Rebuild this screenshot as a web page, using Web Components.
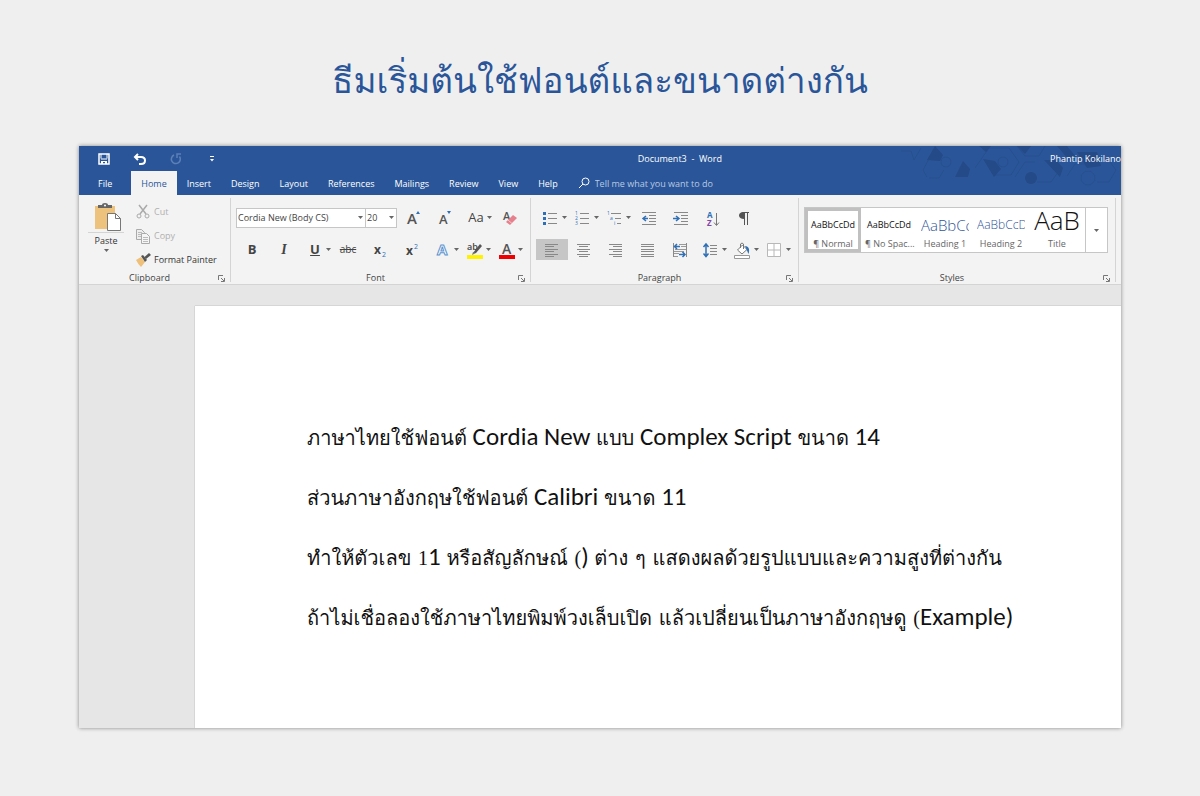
<!DOCTYPE html>
<html lang="th">
<head>
<meta charset="utf-8">
<title>Document3 - Word</title>
<style>
  :root {
    --blue: #2a5699;
    --text: #444;
    --muted: #b0b0b0;
    --line: #d4d4d4;
    --ribbon: #f3f3f3;
    --font-ui: "Open Sans", "Noto Sans", sans-serif;
    --font-thai: "Loma", "Liberation Sans", sans-serif;
  }
  body {
    margin: 0;
    min-height: 100vh;
    box-sizing: border-box;
    padding: 46px 79px 68px;
    background: #efefef;
    font: 9px/12px var(--font-ui);
    color: var(--text);
    display: flex;
    flex-direction: column;
  }
  h1 {
    margin: 0;
    padding-bottom: 30px;
    font: 35px/70px var(--font-thai);
    color: var(--blue);
    text-align: center;
  }
  /* latin runs sit in a larger sans face, complex-script digits in a thin serif */
  doc-page span { font: 25px/1 Carlito, Lato, sans-serif; }
  doc-page i { font: 20px/1 "Liberation Serif", serif; }
</style>
</head>
<body>
<h1>ธีมเริ่มต้นใช้ฟอนต์และขนาดต่างกัน</h1>

<word-window>
  <title-bar slot="title" user="Phantip Kokilano">Document3&nbsp; -&nbsp; Word</title-bar>
  <ribbon-tabs slot="tabs" active="Home"></ribbon-tabs>

  <ribbon-group slot="ribbon" name="Clipboard" style="--width: 152px">
    <paste-panel></paste-panel>
  </ribbon-group>

  <ribbon-group slot="ribbon" name="Font" style="--width: 300px">
    <tool-row>
      <pick-box label="Font" value="Cordia New (Body CS)" style="--width: 130px"></pick-box>
      <pick-box label="Font size" value="20" style="--width: 32px; --shift: -1px"></pick-box>
      <tool-button label="Grow font" icon="grow"></tool-button>
      <tool-button label="Shrink font" icon="shrink"></tool-button>
      <tool-button label="Change case" menu><span style="font-size: 13px">Aa</span></tool-button>
      <tool-button label="Clear formatting" icon="eraser"></tool-button>
    </tool-row>
    <tool-row>
      <tool-button label="Bold"><b style="font-size: 13px">B</b></tool-button>
      <tool-button label="Italic"><b style="font: italic bold 14px 'Liberation Serif', serif">I</b></tool-button>
      <tool-button label="Underline" menu><b style="font-size: 13px; text-decoration: underline">U</b></tool-button>
      <tool-button label="Strikethrough"><s style="font-size: 10px">abc</s></tool-button>
      <tool-button label="Subscript" icon="sub"></tool-button>
      <tool-button label="Superscript" icon="sup"></tool-button>
      <tool-button label="Text effects" icon="effects" menu></tool-button>
      <tool-button label="Highlight colour" icon="highlight" menu></tool-button>
      <tool-button label="Font colour" icon="color" menu></tool-button>
    </tool-row>
  </ribbon-group>

  <ribbon-group slot="ribbon" name="Paragraph" style="--width: 268px">
    <tool-row>
      <tool-button label="Bullets" icon="bullets" menu></tool-button>
      <tool-button label="Numbering" icon="numbers" menu></tool-button>
      <tool-button label="Multilevel list" icon="levels" menu></tool-button>
      <tool-button label="Decrease indent" icon="outdent"></tool-button>
      <tool-button label="Increase indent" icon="indent"></tool-button>
      <tool-button label="Sort" icon="sort"></tool-button>
      <tool-button label="Show marks" icon="pilcrow"></tool-button>
    </tool-row>
    <tool-row>
      <tool-button label="Align left" icon="left" pressed></tool-button>
      <tool-button label="Centre" icon="center"></tool-button>
      <tool-button label="Align right" icon="right"></tool-button>
      <tool-button label="Justify" icon="justify"></tool-button>
      <tool-button label="Text direction" icon="direction"></tool-button>
      <tool-button label="Line spacing" icon="spacing" menu></tool-button>
      <tool-button label="Shading" icon="shading" menu></tool-button>
      <tool-button label="Borders" icon="borders" menu></tool-button>
    </tool-row>
  </ribbon-group>

  <ribbon-group slot="ribbon" name="Styles" style="--width: 317px">
    <style-gallery>
      <style-card name="¶ Normal" selected>AaBbCcDd</style-card>
      <style-card name="¶ No Spac...">AaBbCcDd</style-card>
      <style-card name="Heading 1" style="--size: 15px; --weight: 300; --color: #2f5597">AaBbCc</style-card>
      <style-card name="Heading 2" style="--size: 12px; --weight: 300; --color: #2f5597">AaBbCcD</style-card>
      <style-card name="Title" style="--size: 26px; --lead: 16px; --weight: 300">AaB</style-card>
    </style-gallery>
  </ribbon-group>

  <doc-page>
    <p>ภาษาไทยใช้ฟอนต์<span lang="en"> Cordia New </span>แบบ<span lang="en"> Complex Script </span>ขนาด<span lang="en"> 14</span></p>
    <p>ส่วนภาษาอังกฤษใช้ฟอนต์<span lang="en"> Calibri </span>ขนาด<span lang="en"> 11</span></p>
    <p>ทำให้ตัวเลข <i>1</i><span lang="en">1 </span>หรือสัญลักษณ์ <i>(</i><span lang="en">) </span>ต่าง ๆ แสดงผลด้วยรูปแบบและความสูงที่ต่างกัน</p>
    <p>ถ้าไม่เชื่อลองใช้ภาษาไทยพิมพ์วงเล็บเปิด แล้วเปลี่ยนเป็นภาษาอังกฤษดู <i>(</i><span lang="en">Example)</span></p>
  </doc-page>
</word-window>

<script>
const lines = (color, ...rows) =>
  rows.map(([x1, x2, y]) => `<path d="M${x1} ${y}H${x2}" stroke="${color}"/>`).join('');

const glyph = (x, y, size, color, text, extra = '') =>
  `<text x="${x}" y="${y}" font-size="${size}" fill="${color}" ${extra}>${text}</text>`;

// all tool icons share a 18x18 grid
const ICONS = {
  grow: glyph(3, 15, 15, '#555', 'A', 'font-weight="600"') + '<path d="M12 5L14 2L16 5z" fill="#2f6fb5"/>',
  shrink: glyph(3, 15, 13, '#555', 'A', 'font-weight="600"') + '<path d="M11 2L13 5L15 2z" fill="#2f6fb5"/>',
  eraser: glyph(3, 11, 11, '#555', 'A', 'font-weight="600"') + '<path d="M6 13L13 6L17 9L10 16z" fill="#e5808d"/><path d="M8 11L12 14.500" stroke="#f7c4ca"/>',
  sub: glyph(3, 13, 12, '#444', 'x', 'font-weight="700"') + glyph(11, 16, 7, '#2f6fb5', '2'),
  sup: glyph(3, 14, 12, '#444', 'x', 'font-weight="700"') + glyph(11, 8, 7, '#2f6fb5', '2'),
  effects: glyph(3, 14, 15, '#fff', 'A', 'font-weight="700" stroke="#5b93d0" stroke-width="1"'),
  highlight: glyph(1, 9, 9, '#444', 'ab', 'font-weight="600"') + '<path d="M7 12L14 3L16 5L10 12z" fill="#555"/><path d="M6 14L7 11L10 12z" fill="#777"/><path d="M1 14h16v4H1z" fill="#fff200"/>',
  color: glyph(4, 13, 14, '#555', 'A', 'font-weight="600"') + '<path d="M1 14h16v4H1z" fill="#f00000"/>',
  bullets: '<path d="M1 3h3v3H1zM1 8h3v3H1zM1 13h3v3H1z" fill="#2f6fb5"/>' +
    lines('#888', [6, 15, 4.5], [6, 15, 9.5], [6, 15, 14.5]),
  numbers: glyph(1, 6, 5, '#2f6fb5', '1') + glyph(1, 11, 5, '#2f6fb5', '2') + glyph(1, 16, 5, '#2f6fb5', '3') +
    lines('#888', [6, 15, 4.5], [6, 15, 9.5], [6, 15, 14.5]),
  levels: glyph(1, 6, 5, '#2f6fb5', '1') + glyph(4, 11, 5, '#2f6fb5', 'a') + glyph(8, 16, 5, '#2f6fb5', 'i') +
    lines('#888', [5, 15, 4.5], [9, 15, 9.5], [11, 15, 14.5]),
  outdent: lines('#888', [3, 17, 3.5], [10, 17, 6.5], [10, 17, 9.5], [10, 17, 12.5], [3, 17, 15.5]) +
    '<path d="M9 9.500H4M7 7L4 9.500L7 12" stroke="#2f6fb5" stroke-width="1.500" fill="none"/>',
  indent: lines('#888', [3, 17, 3.5], [10, 17, 6.5], [10, 17, 9.5], [10, 17, 12.5], [3, 17, 15.5]) +
    '<path d="M2 9.500H8M5 7L8 9.500L5 12" stroke="#2f6fb5" stroke-width="1.500" fill="none"/>',
  sort: glyph(4, 9, 8, '#2f6fb5', 'A', 'font-weight="700"') + glyph(4, 17, 8, '#8445a5', 'Z', 'font-weight="700"') +
    '<path d="M13.500 4V16M11 13.500L13.500 16.500L16 13.500" stroke="#777" fill="none"/>',
  pilcrow: '<path d="M9 3C5 3 4 5 4 6.500C4 8.500 6 10 9 10z" fill="#555"/><path d="M8 3.500H14M9.500 3V16M12.500 3V16" stroke="#555" fill="none"/>',
  left: lines('#888', [2, 15, 3.5], [2, 11, 5.5], [2, 15, 8.5], [2, 11, 10.5], [2, 15, 13.5], [2, 11, 15.5]),
  center: lines('#888', [2, 15, 3.5], [4, 13, 5.5], [2, 15, 8.5], [4, 13, 10.5], [2, 15, 13.5], [4, 13, 15.5]),
  right: lines('#888', [2, 15, 3.5], [6, 15, 5.5], [2, 15, 8.5], [6, 15, 10.5], [2, 15, 13.5], [6, 15, 15.5]),
  justify: lines('#888', [2, 15, 3.5], [2, 15, 5.5], [2, 15, 8.5], [2, 15, 10.5], [2, 15, 13.5], [2, 15, 15.5]),
  direction: '<path d="M2.500 2V16M15.500 2V16" stroke="#888"/>' +
    lines('#999', [8, 15, 3.5], [10, 15, 5.5], [4, 15, 8.5], [3, 13, 10.5], [3, 8, 12.5], [3, 7, 15.5]) +
    '<path d="M9 5.500H4M6 3L3.500 5.500L6 8M8 13.500H14M11.500 11L14 13.500L11.500 16" stroke="#2f6fb5" stroke-width="1.500" fill="none"/>',
  spacing: '<path d="M4 4V15M1.500 6L4 3L6.500 6M1.500 12.500L4 15.500L6.500 12.500" stroke="#2f6fb5" stroke-width="1.500" fill="none"/>' +
    lines('#888', [8, 15, 4.5], [8, 15, 7.5], [8, 15, 10.5], [8, 15, 13.5]),
  shading: '<path d="M3.500 9L8.500 4L13 8.500L8 13z" fill="#fff" stroke="#777"/><path d="M6.500 7V3Q8 1 9.500 3V8" stroke="#777" fill="none"/><path d="M11 5C15 5 16 9 14.500 13C13.500 11 13 9 11 5z" fill="#2f6fb5"/><path d="M.5 14.500H15.500V17.500H.5z" fill="#fff" stroke="#999"/>',
  borders: '<path d="M1.500 2.500H14.500V15.500H1.500zM8 2.500V15.500M1.500 9H14.500" fill="#fff" stroke="#b8b8b8"/>',
  scissors: '<path d="M5 2L12 11M13 2L6 11" stroke="#aaa" stroke-width="1.500"/><circle cx="5" cy="13" r="2" fill="none" stroke="#aaa"/><circle cx="13" cy="13" r="2" fill="none" stroke="#aaa"/>',
  copy: '<path d="M2.500 2.500H7.500L10.500 5.500V12.500H2.500z" fill="#eee" stroke="#aaa"/><path d="M4 5.500H8M4 7.500H8M4 9.500H8" stroke="#bbb"/><path d="M7.500 6.500H12.500L15.500 9.500V16.500H7.500z" fill="#f5f5f5" stroke="#aaa"/><path d="M9 10.500H14M9 12.500H14M9 14.500H14" stroke="#bbb"/>',
  painter: '<path d="M2 9L7 6L11 11L7 16Q4 13 2 9z" fill="#eec07a"/><path d="M7 5L9 4L13 9L11 11z" fill="#555"/><path d="M10.500 6L15 2L17 4L12 8z" fill="#555"/>',
};

const svg = name => `<svg viewBox="0 0 18 18" width="18" height="18" fill="#444" overflow="visible" aria-hidden="true">${ICONS[name]}</svg>`;
const ARROW = '<svg class="arrow" viewBox="0 0 5 3" width="5" height="3" aria-hidden="true"><path d="M0 0H5L2.500 3z" fill="#666"/></svg>';

class WordWindow extends HTMLElement {
  constructor() {
    super();
    this.attachShadow({ mode: 'open' });
    this.shadowRoot.innerHTML = `
      <style>
        :host {
          flex: 1;
          display: flex;
          flex-direction: column;
          overflow: hidden;
          background: #e6e6e6;
          box-shadow: 0 0 4px rgba(0, 0, 0, .45);
        }
        header {
          position: relative;
          background: var(--blue);
        }
        header > svg {
          position: absolute;
          top: 0;
          right: 0;
        }
        .ribbon {
          display: flex;
          height: 89px;
          background: var(--ribbon);
          border-bottom: 1px solid var(--line);
        }
        main {
          flex: 1;
          display: flex;
          padding: 21px 0 0 116px;
        }
      </style>
      <header>
        <svg width="224" height="42" viewBox="0 0 224 42" fill="none" stroke="#264f8f" aria-hidden="true">
          <path d="M4 5h10l3 9 7-12M30 31l-4-7 8-15h6M32 32h10l5-8"/>
          <circle cx="49" cy="16" r="5"/><circle cx="106" cy="16" r="5"/><circle cx="191" cy="32" r="7"/>
          <path d="M78 22l14-20h20l10 14-8 13H98M120 0l8 10h14l6-10M118 31l10-15h10M140 36h14l10-14M170 30l8-12h14M200 36h12l7-12-6-8"/>
          <g fill="#244a87" stroke="none">
            <path d="M30 14L38 0l8 9-3 6zM58 31l8-16 7 8-2 8zM86 13l12 2 6 8-7 8zM82 0h12l-5 6zM120 0h14l-6 8zM147 14l16 17 3-9-7-8zM160 0h10l10 12-8 2zM180 6l10 16 14-2-4-14z"/>
            <circle cx="134" cy="32" r="6"/>
          </g>
        </svg>
        <slot name="title"></slot>
        <slot name="tabs"></slot>
      </header>
      <div class="ribbon"><slot name="ribbon"></slot></div>
      <main><slot></slot></main>`;
  }
}
customElements.define('word-window', WordWindow);

class TitleBar extends HTMLElement {
  constructor() {
    super();
    this.attachShadow({ mode: 'open' });
    this.shadowRoot.innerHTML = `
      <style>
        :host {
          position: relative;
          display: grid;
          grid-template-columns: 7fr auto 5fr;
          align-items: center;
          height: 25px;
          color: #fff;
        }
        nav { display: flex; gap: 8px; padding-left: 11px; }
        button {
          width: 28px;
          height: 20px;
          padding: 0;
          border: 0;
          background: none;
          display: grid;
          place-items: center;
        }
        .user { justify-self: end; white-space: nowrap; }
      </style>
      <nav>
        <button aria-label="Save"><svg width="12" height="12" viewBox="0 0 12 12"><path d="M1 1H11V11H1z" fill="none" stroke="#fff" stroke-width="1.500"/><path d="M3 6H9M3 1V5.500M9 1V5.500" stroke="#fff"/><path d="M3 8H9V11H7V9H5V11H3z" fill="#fff"/></svg></button>
        <button aria-label="Undo"><svg width="14" height="12" viewBox="0 0 14 12" fill="none" stroke="#fff" stroke-width="2"><path d="M5 1L2 4L5 7M2 4H8Q12 4 12 7.500T8 11H6"/></svg></button>
        <button aria-label="Redo"><svg width="12" height="12" viewBox="0 0 12 12" fill="none" stroke="#5c80b8" stroke-width="1.500"><path d="M4 2A4.500 4.500 0 1 0 9.500 3.500M7 5V1H11"/></svg></button>
        <button aria-label="Customise"><svg width="4" height="6" viewBox="0 0 4 6"><path d="M0 .500H4" stroke="#fff"/><path d="M0 3H4L2 5.500z" fill="#fff"/></svg></button>
      </nav>
      <slot></slot>
      <span class="user">${this.getAttribute('user')}</span>`;
  }
}
customElements.define('title-bar', TitleBar);

class RibbonTabs extends HTMLElement {
  constructor() {
    super();
    this.attachShadow({ mode: 'open' });
    const tabs = ['Home', 'Insert', 'Design', 'Layout', 'References', 'Mailings', 'Review', 'View', 'Help'];
    const active = this.getAttribute('active');
    this.shadowRoot.innerHTML = `
      <style>
        :host { position: relative; display: flex; height: 24px; }
        a {
          padding: 1px 10px 0;
          line-height: 23px;
          color: #fff;
          text-decoration: none;
        }
        a.file { padding: 1px 19px 0; }
        a.active { background: var(--ribbon); color: var(--blue); }
        label { display: flex; align-items: center; gap: 5px; padding-left: 10px; }
        input {
          width: 200px;
          padding: 1px 0 0;
          border: 0;
          background: none;
          font: inherit;
          color: #fff;
        }
        input::placeholder { color: #b9c9e3; opacity: 1; }
      </style>
      <a class="file" href="#file">File</a>
      ${tabs.map(t => `<a href="#${t.toLowerCase()}" class="${t === active ? 'active' : ''}">${t}</a>`).join('')}
      <label>
        <svg width="12" height="12" viewBox="0 0 12 12" fill="none" stroke="#fff" aria-hidden="true"><circle cx="7.500" cy="4.500" r="3.500"/><path d="M5 7L1 11"/></svg>
        <input type="text" aria-label="Tell me" placeholder="Tell me what you want to do">
      </label>`;
  }
}
customElements.define('ribbon-tabs', RibbonTabs);

class RibbonGroup extends HTMLElement {
  constructor() {
    super();
    this.attachShadow({ mode: 'open' });
    this.shadowRoot.innerHTML = `
      <style>
        :host {
          flex: none;
          box-sizing: border-box;
          width: var(--width);
          margin: 3px 0 2px;
          padding: 0 3px 0 5px;
          border-right: 1px solid var(--line);
          display: flex;
          flex-direction: column;
        }
        .body {
          flex: 1;
          display: flex;
          flex-direction: column;
          gap: 11px;
          padding-top: 9px;
        }
        footer {
          display: grid;
          grid-template-columns: 1fr 12px;
          align-items: center;
          height: 8px;
          line-height: 8px;
          text-align: center;
        }
        button { padding: 0; border: 0; background: none; line-height: 0; }
      </style>
      <div class="body"><slot></slot></div>
      <footer>
        <span>${this.getAttribute('name')}</span>
        <button aria-label="More options"><svg width="7" height="7" viewBox="0 0 7 7" fill="none" stroke="#777"><path d="M.5 5V.500H5M3 3L6 6M6.500 3V6.500H3"/></svg></button>
      </footer>`;
  }
}
customElements.define('ribbon-group', RibbonGroup);

class PastePanel extends HTMLElement {
  constructor() {
    super();
    this.attachShadow({ mode: 'open' });
    this.shadowRoot.innerHTML = `
      <style>
        :host { display: flex; gap: 10px; margin-top: -9px; padding: 5px 0 0 4px; }
        button {
          padding: 0;
          border: 0;
          background: none;
          font: inherit;
          color: #333;
          display: flex;
          align-items: center;
          gap: 2px;
        }
        .paste { flex-direction: column; width: 36px; height: 54px; }
        .paste .big { border-bottom: 1px solid var(--line); padding: 0 1px 0 5px; }
        .side { display: flex; flex-direction: column; gap: 6px; }
        .side button { height: 18px; }
        .off { color: var(--muted); }
        svg { display: block; }
      </style>
      <button class="paste">
        <svg class="big" width="30" height="29" viewBox="0 0 30 29" aria-hidden="true">
          <path d="M2 3H22V26H2z" fill="#edc27d"/>
          <path d="M5 2H9Q9 0 12 0T15 2H19V5H5z" fill="#666"/><circle cx="12" cy="2.500" r="1" fill="#fff"/>
          <path d="M14.500 10.500H22.500L27.500 15.500V27.500H14.500z" fill="#fff" stroke="#777"/><path d="M22.500 10.500V15.500H27.500" fill="none" stroke="#777"/>
        </svg>
        <span>Paste</span>${ARROW}
      </button>
      <div class="side">
        <button class="off">${svg('scissors')}Cut</button>
        <button class="off">${svg('copy')}Copy</button>
        <button>${svg('painter')}Format Painter</button>
      </div>`;
  }
}
customElements.define('paste-panel', PastePanel);

class ToolRow extends HTMLElement {
  constructor() {
    super();
    this.attachShadow({ mode: 'open' });
    this.shadowRoot.innerHTML = `
      <style>:host { display: flex; align-items: center; height: 21px; }</style>
      <slot></slot>`;
  }
}
customElements.define('tool-row', ToolRow);

class ToolButton extends HTMLElement {
  constructor() {
    super();
    this.attachShadow({ mode: 'open' });
    const icon = this.getAttribute('icon');
    const menu = this.hasAttribute('menu');
    this.shadowRoot.innerHTML = `
      <style>
        :host { display: block; width: 32px; }
        button {
          width: 100%;
          height: 21px;
          padding: 0;
          border: 0;
          background: none;
          font: inherit;
          color: var(--text);
          display: flex;
          align-items: center;
          justify-content: center;
        }
        button.menu { justify-content: flex-end; padding-right: 1px; gap: 2px; }
        button[aria-pressed] { background: #c6c6c6; }
        .face { min-width: 18px; }
        button svg:not(.arrow) { display: block; }
      </style>
      <button class="${menu ? 'menu' : ''}" aria-label="${this.getAttribute('label')}" ${this.hasAttribute('pressed') ? 'aria-pressed="true"' : ''}>
        <span class="face">${icon ? svg(icon) : '<slot></slot>'}</span>${menu ? ARROW : ''}
      </button>`;
  }
}
customElements.define('tool-button', ToolButton);

class PickBox extends HTMLElement {
  constructor() {
    super();
    this.attachShadow({ mode: 'open' });
    this.shadowRoot.innerHTML = `
      <style>
        :host {
          display: grid;
          align-items: center;
          box-sizing: border-box;
          width: var(--width);
          height: 20px;
          margin-left: var(--shift, 0);
          border: 1px solid #c6c6c6;
          background: #fff;
        }
        select, svg { grid-area: 1 / 1; }
        select {
          appearance: none;
          width: 100%;
          height: 18px;
          padding: 1px 0 0 1px;
          border: 0;
          background: none;
          font: inherit;
          color: var(--text);
        }
        svg { justify-self: end; margin-right: 2px; pointer-events: none; }
      </style>
      <select aria-label="${this.getAttribute('label')}"><option>${this.getAttribute('value')}</option></select>
      ${ARROW}`;
  }
}
customElements.define('pick-box', PickBox);

class StyleGallery extends HTMLElement {
  constructor() {
    super();
    this.attachShadow({ mode: 'open' });
    this.shadowRoot.innerHTML = `
      <style>
        :host {
          display: flex;
          width: 304px;
          height: 46px;
          box-sizing: border-box;
          border: 1px solid #c6c6c6;
          background: #fff;
        }
        button {
          flex: 1;
          padding: 0;
          border: 0;
          border-left: 1px solid #c6c6c6;
          background: none;
          display: grid;
          place-items: center;
        }
      </style>
      <slot></slot>
      <button aria-label="More styles">${ARROW}</button>`;
  }
}
customElements.define('style-gallery', StyleGallery);

class StyleCard extends HTMLElement {
  constructor() {
    super();
    this.attachShadow({ mode: 'open' });
    this.shadowRoot.innerHTML = `
      <style>
        :host { display: block; width: 56px; }
        button {
          width: 100%;
          height: 44px;
          padding: 3px 4px 1px;
          border: 0;
          background: none;
          font: inherit;
          color: #666;
        }
        :host([selected]) button { box-shadow: inset 0 0 0 3px #c0c0c0; }
        .preview {
          height: 26px;
          overflow: hidden;
          white-space: nowrap;
          font-size: var(--size, 9px);
          font-weight: var(--weight, 400);
          line-height: var(--lead, 26px);
          color: var(--color, #111);
        }
        .name { white-space: nowrap; }
      </style>
      <button>
        <div class="preview"><slot></slot></div>
        <div class="name">${this.getAttribute('name')}</div>
      </button>`;
  }
}
customElements.define('style-card', StyleCard);

class DocPage extends HTMLElement {
  constructor() {
    super();
    this.attachShadow({ mode: 'open' });
    this.shadowRoot.innerHTML = `
      <style>
        :host {
          flex: 1;
          display: block;
          padding: 102px 100px 0 112px;
          background: #fff;
          box-shadow: 0 0 1px rgba(0, 0, 0, .4);
          color: #111;
          font: 20px/60px var(--font-thai);
        }
        ::slotted(p) { margin: 0; white-space: nowrap; }
      </style>
      <slot></slot>`;
  }
}
customElements.define('doc-page', DocPage);
</script>
</body>
</html>
